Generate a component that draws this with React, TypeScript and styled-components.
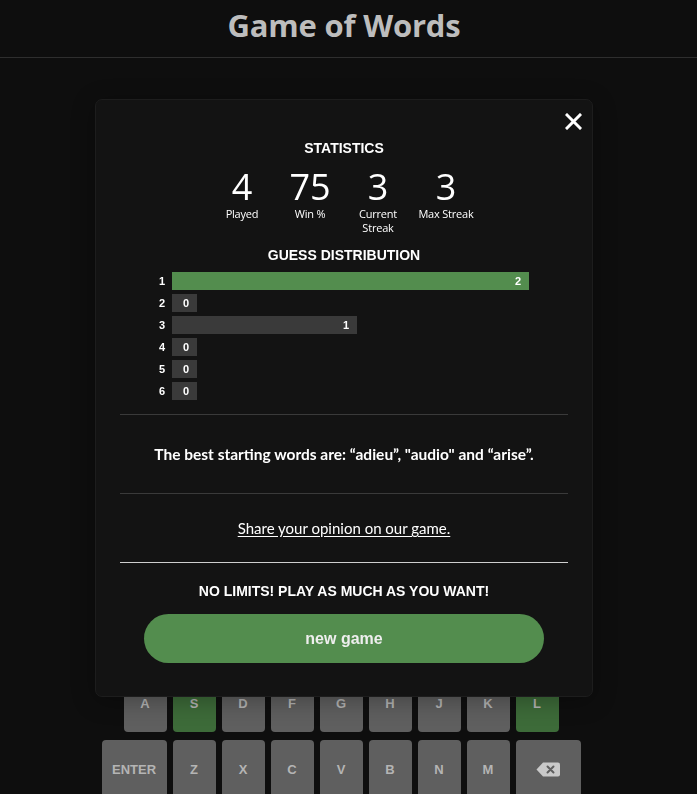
import React from "react";
import styled, { createGlobalStyle } from "styled-components";

const GlobalStyle = createGlobalStyle`
  html, body { margin: 0; padding: 0; background: #0e0e0e; overflow: hidden; }
  * { box-sizing: border-box; }
`;

const Page = styled.div`
  width: 100%;
  height: 794px;
  display: flex;
  flex-direction: column;
  background: #0e0e0e;
  overflow: hidden;
`;

const Header = styled.header`
  flex-shrink: 0;
  height: 58px;
  border-bottom: 1px solid #2e2e2e;
  display: flex;
  align-items: center;
  justify-content: center;
  padding-right: 9px;
  padding-bottom: 7px;
`;

const Title = styled.h1`
  margin: 0;
  font-family: "Open Sans", sans-serif;
  font-weight: 700;
  font-size: 31px;
  letter-spacing: -0.2px;
  color: #bdbdbd;
`;

const Board = styled.div`
  flex-shrink: 0;
  height: 550px;
`;

const Keyboard = styled.div`
  flex-shrink: 0;
  display: flex;
  flex-direction: column;
  align-items: center;
  gap: 8px;
  padding-right: 15px;
`;

const KeyRow = styled.div`
  display: flex;
  gap: 6px;
`;

const Key = styled.div<{ $wide?: boolean; $state?: "correct" | "none" }>`
  flex-shrink: 0;
  width: ${(p) => (p.$wide ? "65px" : "43px")};
  height: 58px;
  border-radius: 4px;
  background: ${(p) => (p.$state === "correct" ? "#3d6b39" : "#5f5f5f")};
  color: #b4b4b4;
  display: flex;
  align-items: center;
  justify-content: center;
  font-family: "Liberation Sans", Arial, sans-serif;
  font-weight: 700;
  font-size: 13px;
`;

const Overlay = styled.div`
  position: fixed;
  inset: 0;
  display: flex;
  justify-content: center;
  align-items: flex-start;
  padding-top: 99px;
  padding-right: 9px;
`;

const Modal = styled.div`
  position: relative;
  width: 498px;
  height: 598px;
  background: #131313;
  border: 1px solid #1d1d1d;
  border-radius: 7px;
  padding: 40px 24px 0;
  display: flex;
  flex-direction: column;
  align-items: center;
  color: #fff;
  box-shadow: 0 4px 23px rgba(0, 0, 0, 0.3);
`;

const CloseButton = styled.button`
  position: absolute;
  top: 10px;
  right: 8px;
  width: 22px;
  height: 22px;
  padding: 0;
  border: none;
  background: transparent;
  display: flex;
  align-items: center;
  justify-content: center;
  cursor: pointer;
`;

const Heading = styled.h2`
  margin: 0;
  font-family: "Liberation Sans", Arial, sans-serif;
  font-weight: 700;
  font-size: 14px;
  line-height: 16px;
  color: #fff;
`;

const StatsRow = styled.div`
  display: flex;
  gap: 8px;
  margin-top: 11px;
  margin-bottom: 13px;
`;

const Stat = styled.div`
  width: 60px;
  display: flex;
  flex-direction: column;
  align-items: center;
  text-align: center;
  font-family: "Open Sans", sans-serif;
`;

const StatNumber = styled.div`
  font-size: 36px;
  line-height: 40px;
  font-weight: 400;
`;

const StatLabel = styled.div`
  font-size: 11px;
  line-height: 13.5px;
  letter-spacing: -0.2px;
`;

const Distribution = styled.div`
  width: 374px;
  margin-top: 9px;
  margin-right: 4px;
  display: flex;
  flex-direction: column;
  gap: 4px;
`;

const DistRow = styled.div`
  display: flex;
  align-items: center;
  height: 18px;
`;

const DistLabel = styled.div`
  width: 17px;
  padding-right: 3px;
  text-align: center;
  font-family: "Liberation Sans", Arial, sans-serif;
  font-weight: 700;
  font-size: 11px;
`;

const BarTrack = styled.div`
  flex: 1;
  display: flex;
`;

const Bar = styled.div<{ $highlight?: boolean }>`
  height: 18px;
  min-width: 25px;
  padding: 0 8px;
  display: flex;
  align-items: center;
  justify-content: flex-end;
  background: ${(p) => (p.$highlight ? "#538d4e" : "#3a3a3a")};
  font-family: "Liberation Sans", Arial, sans-serif;
  font-weight: 700;
  font-size: 11px;
  color: #fff;
`;

const Divider = styled.hr<{ $bright?: boolean }>`
  width: 100%;
  margin: 0;
  border: none;
  border-top: 1px solid ${(p) => (p.$bright ? "#cfcfcf" : "#3a3a3a")};
`;

const Spacer = styled.div`
  height: 14px;
`;

const Section = styled.div<{ $pad: number }>`
  width: 100%;
  padding: ${(p) => p.$pad}px 0;
  text-align: center;
  font-family: "Lato", "Open Sans", sans-serif;
  line-height: 18px;
`;

const BestWords = styled.p`
  margin: 0;
  font-weight: 700;
  font-size: 15.5px;
  color: #fff;
`;

const ShareLink = styled.a`
  font-size: 15px;
  color: #fff;
  text-decoration: underline;
  text-underline-offset: 2px;
`;

const Promo = styled.div`
  margin-top: 20px;
  font-family: "Liberation Sans", Arial, sans-serif;
  font-weight: 700;
  font-size: 14px;
  line-height: 16px;
  color: #fff;
`;

const NewGameButton = styled.button`
  margin-top: 15px;
  width: 400px;
  height: 49px;
  border: none;
  border-radius: 25px;
  background: #538d4e;
  color: #eeeeee;
  font-family: "Liberation Sans", Arial, sans-serif;
  font-weight: 700;
  font-size: 16px;
  cursor: pointer;
`;

const distribution = [2, 0, 1, 0, 0, 0];
const highlightIndex = 0;

const rows: string[][] = [
  ["Q", "W", "E", "R", "T", "Y", "U", "I", "O", "P"],
  ["A", "S", "D", "F", "G", "H", "J", "K", "L"],
  ["ENTER", "Z", "X", "C", "V", "B", "N", "M", "BACK"],
];
const correct = new Set(["S", "L"]);

const BackspaceIcon = () => (
  <svg width="24" height="15" viewBox="0 0 24 15">
    <path d="M7 0.5 H22 a2 2 0 0 1 2 2 V12.5 a2 2 0 0 1 -2 2 H7 L0.5 7.5 Z" fill="#c9c9c9" />
    <path d="M11.5 4.5 L17.5 10.5 M17.5 4.5 L11.5 10.5" stroke="#5f5f5f" strokeWidth="2" strokeLinecap="round" />
  </svg>
);

const CloseIcon = () => (
  <svg width="17" height="17" viewBox="0 0 17 17">
    <path d="M2 2 L15 15 M15 2 L2 15" stroke="#fff" strokeWidth="3" strokeLinecap="square" />
  </svg>
);

export default function App() {
  const max = Math.max(...distribution);
  return (
    <>
      <GlobalStyle />
      <Page>
        <Header>
          <Title>Game of Words</Title>
        </Header>
        <Board />
        <Keyboard>
          {rows.map((row, i) => (
            <KeyRow key={i}>
              {row.map((k) => (
                <Key
                  key={k}
                  $wide={k === "ENTER" || k === "BACK"}
                  $state={correct.has(k) ? "correct" : "none"}
                >
                  {k === "BACK" ? <BackspaceIcon /> : k}
                </Key>
              ))}
            </KeyRow>
          ))}
        </Keyboard>
      </Page>
      <Overlay>
        <Modal>
          <CloseButton aria-label="close">
            <CloseIcon />
          </CloseButton>
          <Heading>STATISTICS</Heading>
          <StatsRow>
            <Stat>
              <StatNumber>4</StatNumber>
              <StatLabel>Played</StatLabel>
            </Stat>
            <Stat>
              <StatNumber>75</StatNumber>
              <StatLabel>Win %</StatLabel>
            </Stat>
            <Stat>
              <StatNumber>3</StatNumber>
              <StatLabel>Current Streak</StatLabel>
            </Stat>
            <Stat>
              <StatNumber>3</StatNumber>
              <StatLabel>Max Streak</StatLabel>
            </Stat>
          </StatsRow>
          <Heading>GUESS DISTRIBUTION</Heading>
          <Distribution>
            {distribution.map((count, i) => (
              <DistRow key={i}>
                <DistLabel>{i + 1}</DistLabel>
                <BarTrack>
                  <Bar
                    $highlight={i === highlightIndex}
                    style={{ width: count === 0 ? undefined : `calc(13px + (100% - 13px) * ${count / max})` }}
                  >
                    {count}
                  </Bar>
                </BarTrack>
              </DistRow>
            ))}
          </Distribution>
          <Spacer />
          <Divider />
          <Section $pad={30}>
            <BestWords>
              The best starting words are: “adieu”, "audio" and “arise”.
            </BestWords>
          </Section>
          <Divider />
          <Section $pad={25}>
            <ShareLink href="#">Share your opinion on our game.</ShareLink>
          </Section>
          <Divider $bright />
          <Promo>NO LIMITS! PLAY AS MUCH AS YOU WANT!</Promo>
          <NewGameButton>new game</NewGameButton>
        </Modal>
      </Overlay>
    </>
  );
}
